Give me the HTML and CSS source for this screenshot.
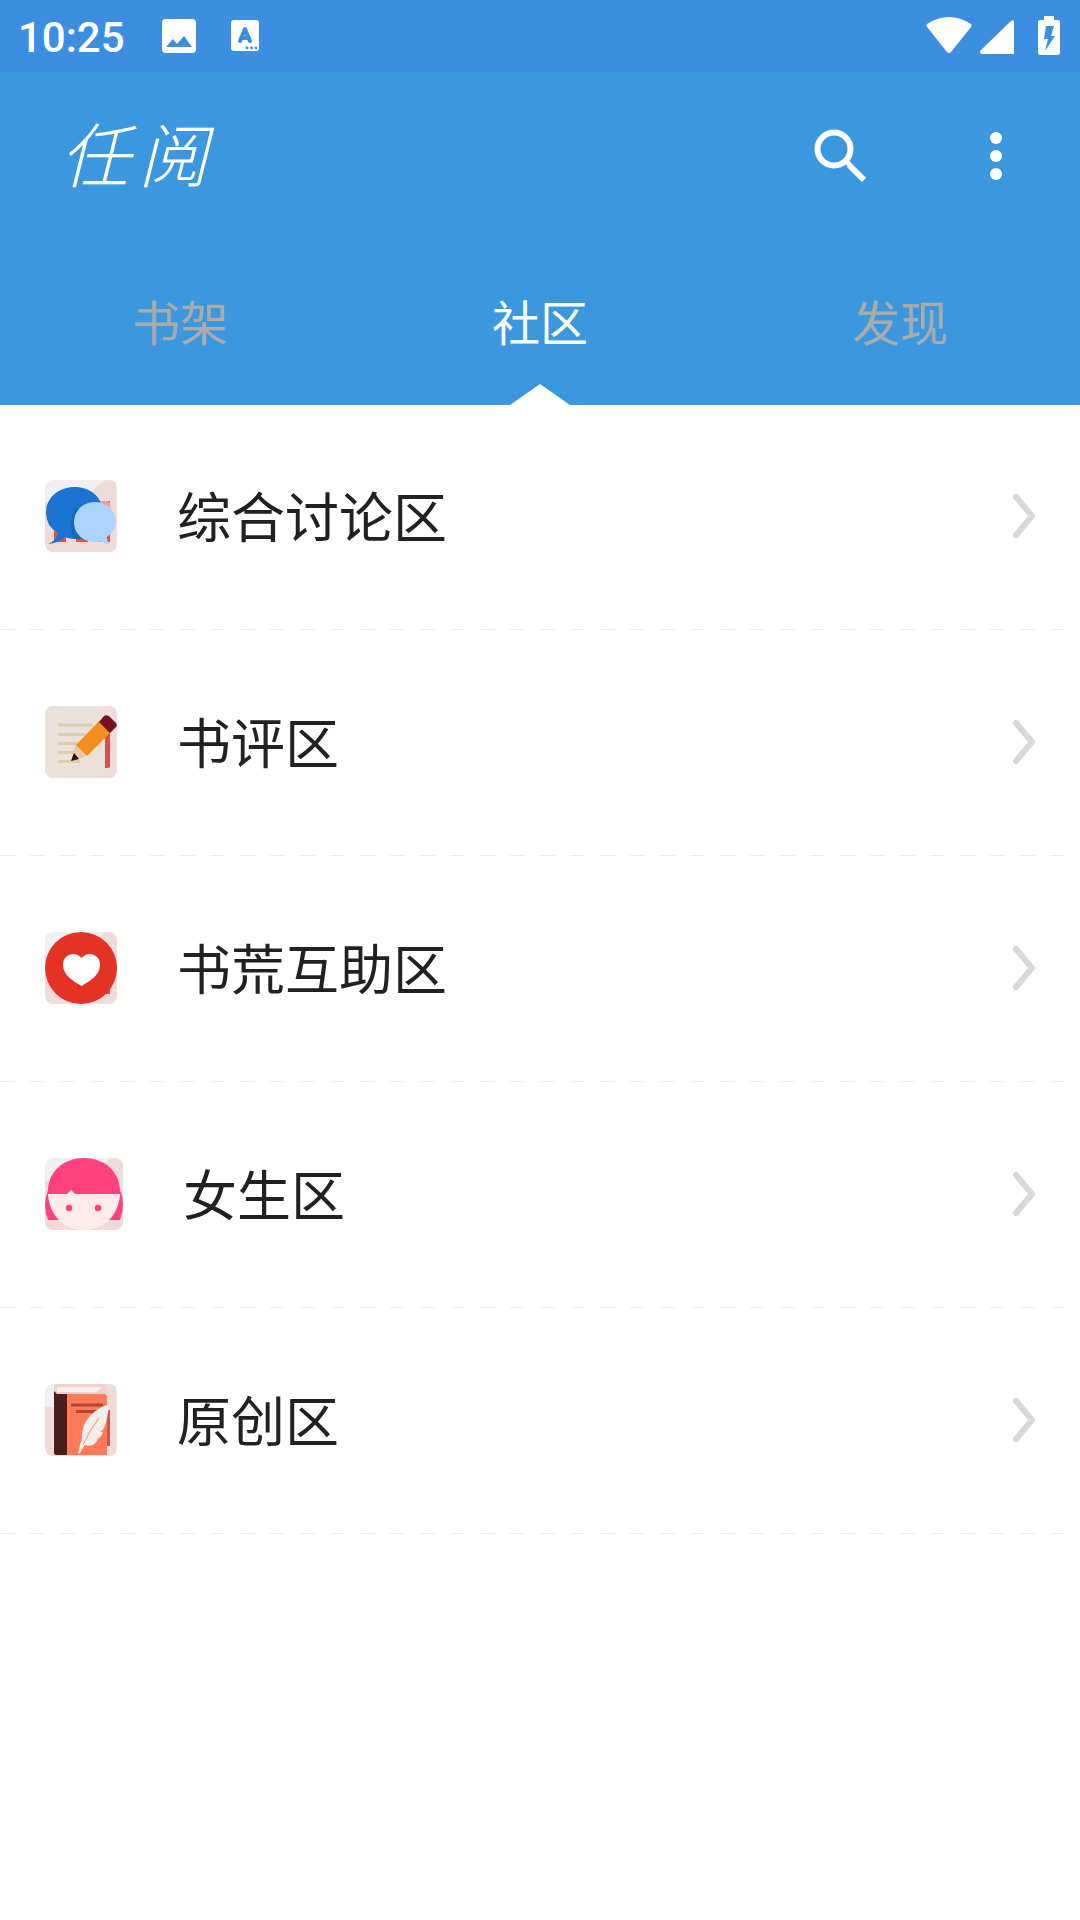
FILE: index.html
```html
<!DOCTYPE html>
<html lang="zh-CN">
<head>
<meta charset="utf-8">
<meta name="viewport" content="width=device-width, initial-scale=1">
<title>任阅</title>
<link rel="stylesheet" href="styles.css">
</head>
<body>
<div class="status">
  <span class="time">10:25</span>
  <svg class="status-image" width="34" height="34" viewBox="0 0 34 34"><path fill="#fff" fill-rule="evenodd" d="M4 0H30Q34 0 34 4V30Q34 34 30 34H4Q0 34 0 30V4Q0 0 4 0ZM4 28H30L22 17L15 25L11 20Z"/></svg>
  <svg class="status-app" width="28" height="32" viewBox="0 0 28 32"><rect width="28" height="31" rx="3" fill="#fff"/><path d="M9 21L14 9L19 21M10 18H18" fill="none" stroke="#3c8fe0" stroke-width="4" stroke-linecap="round" stroke-linejoin="round"/><g fill="#3c8fe0"><circle cx="16" cy="28" r="1.4"/><circle cx="20.500" cy="28" r="1.400"/><circle cx="25" cy="28" r="1.400"/></g></svg>
  <div class="system">
    <svg class="wifi" width="46" height="37" viewBox="0 0 46 37"><path fill="#fff" d="M1 7Q23-7 45 7Q46 8 45 10L25 35Q23 37 21 35L1 10Q0 8 1 7Z"/></svg>
    <svg class="signal" width="34" height="37" viewBox="0 0 34 37"><path fill="#fff" d="M31 4Q34 2 34 5V37H2Q0 37 0 34Z"/></svg>
    <svg width="22" height="39" viewBox="0 0 22 39"><path fill="#fff" fill-rule="evenodd" d="M6 0H16V4H20Q22 4 22 6V37Q22 39 20 39H2Q0 39 0 37V6Q0 4 2 4H6ZM8 10L6 23H10L7 35L17 20H13L16 10Z"/></svg>
  </div>
</div>
<header class="header">
  <div class="toolbar">
    <h1 class="logo"><span>任</span><span>阅</span></h1>
    <button class="tool" type="button" aria-label="搜索"><svg width="52" height="54" viewBox="0 0 52 54"><g fill="none" stroke="#fff"><circle cx="20" cy="20" r="16.500" stroke-width="6"/><path d="M33 33L36 36" stroke-width="5"/><path d="M35 36L50 51" stroke-width="6"/></g></svg></button>
    <button class="tool" type="button" aria-label="更多"><svg width="12" height="48" viewBox="0 0 12 48" fill="#fff"><circle cx="6" cy="6" r="6"/><circle cx="6" cy="24" r="6"/><circle cx="6" cy="42" r="6"/></svg></button>
  </div>
  <nav class="tabs">
    <a class="tab" href="#shelf">书架</a>
    <a class="tab active" href="#community" aria-current="page">社区</a>
    <a class="tab" href="#discover">发现</a>
  </nav>
</header>
<main id="community">
  <ul class="list">
    <li><a class="row" href="#discussion">
      <svg class="icon" viewBox="0 0 72 72"><path fill="#f0f0f0" d="M0 0H72V72H0Z"/><path fill="#efdcda" d="M0 22H40C48 10 54 0 64 0H72V72H0Z"/><path fill="#d9554c" d="M9 45H21V62H9ZM31 45H43V62H31ZM53 21H65V62H53Z"/><path fill="#e9a09a" d="M53 21H63L65 23V45H53Z"/><path fill="#1b74d1" d="M13 53Q1 46 1 33C1 18 13 7 30 7C46 7 58 18 58 33C58 50 45 59 30 59Q24 59 20 57Q14 63 3 64Q11 61 13 53Z"/><path fill="#1767bd" d="M31 28Q22 42 29 59H38L46 30Z"/><path fill="#abd4ff" d="M64 59Q60 62 51 62C38 62 29 54 29 42C29 31 38 22 50 22C62 22 71 31 71 42Q71 50 62 57Q61 61 65 64Q59 64 56 61Z"/></svg>
      <span class="name">综合讨论区</span><svg class="arrow" viewBox="0 0 24 46"><path d="M4 4L20 23L4 42"/></svg></a></li>
    <li><a class="row" href="#reviews">
      <svg class="icon" viewBox="0 0 72 72"><path fill="#efdcda" d="M0 0H72V72H0Z"/><path fill="#d4544b" d="M60 24H65V61L63 62H60Z"/><path fill="#eae1d9" d="M0 0H60V72H0Z"/><path stroke="#decdb5" stroke-width="3" d="M13 19H48M13 28.500H40M13 37.500H32M13 46.500H30M13 55.500H35"/><path fill="#efc5a4" d="M31 39L42 50L26 55Z"/><path fill="#f28d20" d="M54 15L65 27L42 50L31 39Z"/><path fill="#741319" d="M54 16L59 10Q62 8 65 11L71 17Q73 20 70 22L65 27Z"/><path fill="#1c0a11" d="M29 47L34 53L26 55Z"/></svg>
      <span class="name">书评区</span><svg class="arrow" viewBox="0 0 24 46"><path d="M4 4L20 23L4 42"/></svg></a></li>
    <li><a class="row" href="#help">
      <svg class="icon" viewBox="0 0 72 72"><path fill="#f0f0f0" d="M0 0H72V72H0Z"/><path fill="#efdcda" d="M0 24H48Q52 0 64 0H72V72H0Z"/><path fill="#d4544b" d="M50 48H65V62H50Z"/><circle cx="36" cy="36" r="36" fill="#e43324"/><path fill="#fff" d="M36.500 26C40 22 45 21 49 23C53 25 55 28 55 33C55 43 45 49 36.500 54C28 49 18 43 18 33C18 28 20 25 24 23C28 21 33 22 36.500 26Z"/></svg>
      <span class="name">书荒互助区</span><svg class="arrow" viewBox="0 0 24 46"><path d="M4 4L20 23L4 42"/></svg></a></li>
    <li><a class="row" href="#girls">
      <svg class="icon wide" viewBox="0 0 78 72"><path fill="#f0f0f0" d="M0 0H78V72H0Z"/><path fill="#efdcda" d="M0 23H50Q58 0 70 0H78V72H0Z"/><path fill="#ff417f" d="M3 62Q-3 48 3 32C4 12 20 0 39 0S74 12 75 32Q81 46 75 62Z"/><path fill="#fdecea" d="M3 36H22L26 32L30 36H75C74 56 60 72 39 72S4 56 3 36Z"/><circle cx="24" cy="50" r="3.200" fill="#ff417f"/><circle cx="53" cy="50" r="3.200" fill="#ff417f"/></svg>
      <span class="name">女生区</span><svg class="arrow" viewBox="0 0 24 46"><path d="M4 4L20 23L4 42"/></svg></a></li>
    <li><a class="row" href="#original">
      <svg class="icon" viewBox="0 0 72 72"><path fill="#f0f0f0" d="M0 0H72V72H0Z"/><path fill="#efdcda" d="M0 23H9V0H72V72H0Z"/><path fill="#d4544b" d="M58 26H65V62H58Z"/><path fill="#f3cfca" d="M12 0H58Q62 2 62 10H10Q8 3 12 0Z"/><path fill="#f1f0ef" d="M12 3H57L52 8H12Z"/><path fill="#fe7b59" d="M9 10H60L62 12V71H9Z"/><path fill="#481f1b" d="M9 7L12 10H22V71H11L9 69Z"/><path stroke="#b24731" stroke-width="3" d="M26 21H58M31 27.500H53"/><path fill="#f5eeea" d="M65 20C61 21 42 28 38 45C36 52 38 54 35 61L33 70L35 69Q38 63 40 61Q49 64 53 55L50 56Q57 53 58 48L55 48C62 45 62 30 65 20Z"/><path fill="none" stroke="#ef957b" d="M54 34Q44 47 38 61"/></svg>
      <span class="name">原创区</span><svg class="arrow" viewBox="0 0 24 46"><path d="M4 4L20 23L4 42"/></svg></a></li>
  </ul>
</main>
</body>
</html>
```
FILE: styles.css
```css
* { box-sizing: border-box; }
body {
  margin: 0;
  background: #fff;
  color: #212121;
  font-family: "Noto Sans CJK SC", sans-serif;
}
svg { display: block; flex: none; }
a { color: inherit; text-decoration: none; }

.status {
  display: flex;
  align-items: center;
  height: 72px;
  padding: 0 20px 0 18px;
  background: #3c8fe0;
  color: #fff;
}
.time {
  font: 500 42px/72px Roboto, sans-serif;
  padding-top: 4px;
}
.status-image { margin-left: 37px; }
.status-app { margin-left: 35px; }
.system {
  display: flex;
  align-items: center;
  margin-left: auto;
  padding-bottom: 2px;
}
.signal { margin: 0 24px 0 8px; }

.header { background: #3b98df; color: #fff; }
.toolbar {
  display: flex;
  align-items: center;
  height: 168px;
  padding: 0 24px 0 60px;
}
.logo {
  display: flex;
  gap: 8px;
  margin: 0 auto 0 0;
  padding-bottom: 8px;
  font-size: 70px;
  line-height: 72px;
  font-weight: 300;
  font-style: italic;
}
.tool {
  display: flex;
  align-items: center;
  justify-content: center;
  width: 120px;
  height: 120px;
  padding: 0;
  border: 0;
  background: none;
}
.tool + .tool { margin-left: 36px; }

.tabs { display: grid; grid-template-columns: repeat(3, 1fr); }
.tab {
  position: relative;
  height: 165px;
  color: #aaa;
  font-size: 48px;
  line-height: 160px;
  text-align: center;
}
.tab.active { color: #fff; }
.tab.active::after {
  content: "";
  position: absolute;
  bottom: 0;
  left: 50%;
  margin-left: -30px;
  border: solid transparent;
  border-width: 0 30px 21px;
  border-bottom-color: #fff;
}

.list { margin: 0; padding: 0; list-style: none; }
.row {
  display: flex;
  align-items: center;
  height: 226px;
  padding: 0 44px 4px 45px;
  background: repeating-linear-gradient(90deg, #ececec 0 15px, transparent 15px 30px) 0 224px / 100% 1px no-repeat;
}
.icon { width: 72px; height: 72px; border-radius: 8px; }
.icon.wide { width: 78px; }
.name {
  flex: 1;
  margin-left: 60px;
  padding-bottom: 2px;
  font-size: 54px;
  line-height: 80px;
}
.arrow {
  width: 24px;
  height: 46px;
  fill: none;
  stroke: #d8d8d8;
  stroke-width: 6px;
  stroke-linecap: round;
  stroke-linejoin: round;
}
```
